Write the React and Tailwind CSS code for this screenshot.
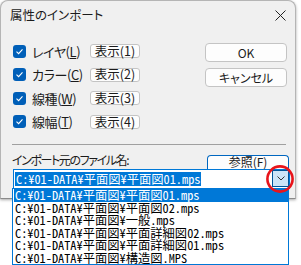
import React from "react";

const jp = { fontFamily: '"Noto Sans CJK JP", "Noto Sans", sans-serif' };

function Check() {
  return (
    <div className="w-[13px] h-[13px] rounded-[3px] bg-[#005fb8] flex items-center justify-center shrink-0">
      <svg width="9" height="9" viewBox="0 0 9 9">
        <path d="M1.5 4.6 L3.6 6.6 L7.5 2.4" fill="none" stroke="white" strokeWidth="1.1" />
      </svg>
    </div>
  );
}

function SmallBtn({ children }) {
  return (
    <div className="w-[50px] h-[14px] rounded-[3px] border border-[#c4c4c4] bg-[#fdfdfd] flex items-center justify-center text-[12.5px] leading-none text-[#1b1b1b]">
      {children}
    </div>
  );
}

function BigBtn({ children, blue }) {
  return (
    <div
      className={
        "w-[82px] h-[19px] rounded-[4px] border bg-[#fdfdfd] flex items-center justify-center text-[12px] leading-none text-[#1b1b1b] " +
        (blue ? "border-[#0067c0]" : "border-[#c4c4c4]")
      }
    >
      {children}
    </div>
  );
}

const rows = [
  ["レイヤ(", "L", ")", "表示(1)"],
  ["カラー(", "C", ")", "表示(2)"],
  ["線種(", "W", ")", "表示(3)"],
  ["線幅(", "T", ")", "表示(4)"],
];

const items = [
  "C:¥01-DATA¥平面図¥平面図01.mps",
  "C:¥01-DATA¥平面図¥平面図02.mps",
  "C:¥01-DATA¥平面図¥一般.mps",
  "C:¥01-DATA¥平面図¥平面詳細図02.mps",
  "C:¥01-DATA¥平面図¥平面詳細図01.mps",
  "C:¥01-DATA¥平面図¥構造図.MPS",
];

export default function App() {
  return (
    <div className="w-[301px] h-[265px] bg-white relative overflow-hidden" style={jp}>
      <div className="w-[296px] h-[199px] bg-[#f0f0f0] border border-[#b5b5b5] border-b-[#8a8a8a] rounded-t-[8px] shadow-[0_1px_3px_rgba(0,0,0,0.35)] flex flex-col [font-feature-settings:'palt']">
        <div className="h-[29px] flex items-center justify-between pl-[9px] pr-[9px] text-[12.5px] text-[#1b1b1b]">
          <span>属性のインポート</span>
          <svg width="11" height="11" viewBox="0 0 11 11">
            <path d="M0.5 0.5 L10.5 10.5 M10.5 0.5 L0.5 10.5" stroke="#222" strokeWidth="1" />
          </svg>
        </div>
        <div className="flex pl-[12px] pt-[14px]">
          <div className="flex flex-col gap-[9.6px] w-[192px]">
            {rows.map(([a, k, b, btn]) => (
              <div key={btn} className="h-[14px] flex items-center">
                <Check />
                <span className="ml-[6px] w-[58px] text-[13px] leading-none tracking-[-0.4px] text-[#1b1b1b]">
                  {a}
                  <span className="underline">{k}</span>
                  {b}
                </span>
                <SmallBtn>{btn}</SmallBtn>
              </div>
            ))}
          </div>
          <div className="flex flex-col gap-[6px] -mt-[1px]">
            <BigBtn>OK</BigBtn>
            <BigBtn>キャンセル</BigBtn>
          </div>
        </div>
        <div className="mt-[15px] ml-[11px] w-[274px] h-px bg-[#a0a0a0]" />
        <div className="flex items-end justify-between pl-[11px] pr-[6px] mt-[9px]">
          <span className="text-[12px] leading-none tracking-[-1.4px] text-[#1b1b1b] mb-[3px]">インポート元のファイル名:</span>
          <div className="w-[82px] h-[14px] rounded-t-[4px] border border-b-0 border-[#0067c0] bg-[#fdfdfd] flex items-center justify-center text-[12px] leading-[12px] text-[#1b1b1b]">
            参照(F)
          </div>
        </div>
        <div className="ml-[12px] w-[277px] h-[20px] bg-white border border-[#0078d7] flex items-center pl-[1px] [font-feature-settings:'hwid']">
          <span className="bg-[#0078d7] text-white text-[12.3px] leading-[14px] h-[14px] px-[1px]">
            {items[0]}
          </span>
          <div className="ml-auto w-[17px] h-[17px] bg-[#cce4f7] border border-[#005499] flex items-center justify-center">
            <svg width="8" height="5" viewBox="0 0 8 5">
              <path d="M0.5 0.5 L4 4 L7.5 0.5" fill="none" stroke="#333" strokeWidth="1" />
            </svg>
          </div>
        </div>
      </div>
      <div className="absolute left-[12px] top-[188px] w-[277px] h-[77px] bg-white border border-[#0078d7] flex flex-col pl-[1px] [font-feature-settings:'hwid']">
        {items.map((t, i) => (
          <div
            key={i}
            className={
              "h-[12.5px] leading-[12.5px] text-[12.3px] pl-[1px] whitespace-nowrap " +
              (i === 0 ? "bg-[#0078d7] text-white" : "text-black")
            }
          >
            {t}
          </div>
        ))}
      </div>
      <svg className="absolute left-[265px] top-[164px]" width="30" height="30" viewBox="0 0 30 30">
        <circle cx="15" cy="15" r="12.6" fill="none" stroke="#e8141b" strokeWidth="2.6" />
      </svg>
    </div>
  );
}
